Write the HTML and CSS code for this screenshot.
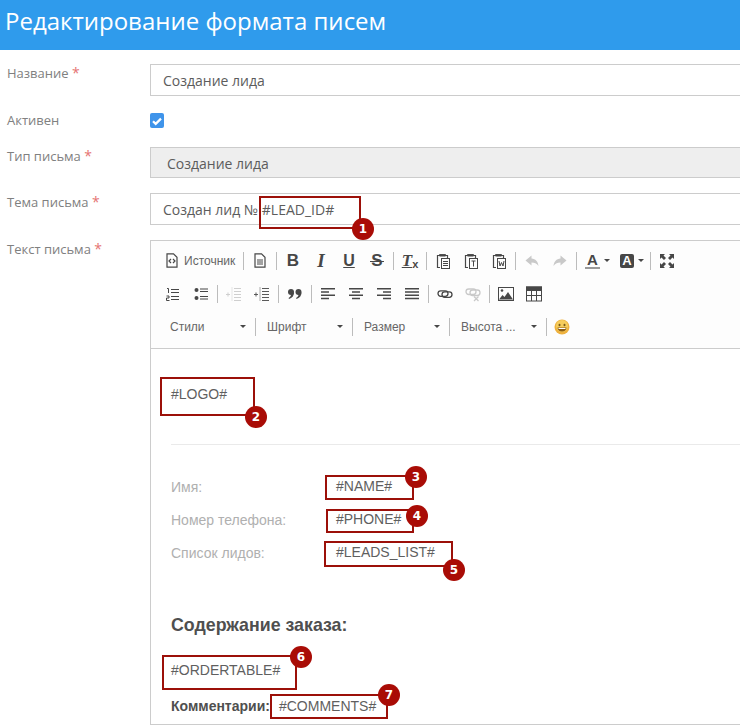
FILE: index.html
```html
<!DOCTYPE html>
<html lang="ru">
<head>
<meta charset="utf-8">
<title>Редактирование формата писем</title>
<link rel="stylesheet" href="styles.css">
</head>
<body>
<div class="page">
  <header class="top"><h1>Редактирование формата писем</h1></header>
  <main class="form">
    <div class="row">
      <label class="lab">Название <i>*</i></label>
      <div class="field">Создание лида</div>
    </div>
    <div class="row row-check">
      <label class="lab">Активен</label>
      <span class="check"><svg viewBox="0 0 14 14" width="14" height="14"><path d="M3 7.200l2.700 2.700L11 4.600" fill="none" stroke="#fff" stroke-width="2.200"/></svg></span>
    </div>
    <div class="row">
      <label class="lab">Тип письма <i>*</i></label>
      <div class="field disabled">Создание лида</div>
    </div>
    <div class="row">
      <label class="lab">Тема письма <i>*</i></label>
      <div class="field">Создан лид № #LEAD_ID#</div>
    </div>
    <div class="row">
      <label class="lab">Текст письма <i>*</i></label>
      <div class="editor">
        <div class="toolbar">
          <div class="tb-row">
            <span class="btn btn-src">
              <svg viewBox="0 0 12 15" width="12" height="15"><path d="M1 .8h6.500L11 4.300v9.900H1z" fill="none" stroke="#474747" stroke-width="1.200"/><path d="M5 6L3 8l2 2M7 6l2 2-2 2" fill="none" stroke="#474747" stroke-width="1.200"/></svg>
              <span class="src-txt">Источник</span>
            </span>
            <span class="sep"></span>
            <span class="btn"><svg viewBox="0 0 12 15" width="12" height="15"><path d="M1 .8h6.500L11 4.300v9.900H1z" fill="none" stroke="#474747" stroke-width="1.200"/><path d="M3 7h6M3 9h6M3 11h6" stroke="#474747"/></svg></span>
            <span class="sep"></span>
            <span class="btn g-b">B</span>
            <span class="btn g-i">I</span>
            <span class="btn g-u">U</span>
            <span class="btn g-s">S</span>
            <span class="sep"></span>
            <span class="btn g-i g-tx"><span class="tx-t">T</span><small>x</small></span>
            <span class="sep"></span>
            <span class="btn"><svg viewBox="0 0 16 16" width="16" height="16"><path d="M5 2.500H2.500v12H5" fill="none" stroke="#474747" stroke-width="1.200"/><path d="M4.500 3V1.600h6V3z" fill="#474747" stroke="#474747"/><path d="M11 2.500h1.500V5" fill="none" stroke="#474747" stroke-width="1.200"/><rect x="6.500" y="5.500" width="8" height="10" fill="none" stroke="#474747"/><path d="M8 8.500h5M8 10.500h5M8 12.500h5" stroke="#474747"/></svg></span>
            <span class="btn"><svg viewBox="0 0 16 16" width="16" height="16"><path d="M5 2.500H2.500v12H5" fill="none" stroke="#474747" stroke-width="1.200"/><path d="M4.500 3V1.600h6V3z" fill="#474747" stroke="#474747"/><path d="M11 2.500h1.500V5" fill="none" stroke="#474747" stroke-width="1.200"/><rect x="6.500" y="5.500" width="8" height="10" fill="none" stroke="#474747"/><path d="M8.500 8h4M10.500 8v5.500" stroke="#474747"/></svg></span>
            <span class="btn"><svg viewBox="0 0 16 16" width="16" height="16"><path d="M5 2.500H2.500v12H5" fill="none" stroke="#474747" stroke-width="1.200"/><path d="M4.500 3V1.600h6V3z" fill="#474747" stroke="#474747"/><path d="M11 2.500h1.500V5" fill="none" stroke="#474747" stroke-width="1.200"/><rect x="6.500" y="5.500" width="8" height="10" fill="none" stroke="#474747"/><path d="M8 8l1 5 1.500-3.500L12 13l1-5" fill="none" stroke="#474747"/></svg></span>
            <span class="sep"></span>
            <span class="btn"><svg viewBox="0 0 16 16" width="16" height="16"><path d="M7.500 2.500L1.500 7.500l6 5V9.500c3 0 5 .8 7 3.500-.4-4.500-3-7.200-7-7.500z" fill="#c9c9c9"/></svg></span>
            <span class="btn"><svg viewBox="0 0 16 16" width="16" height="16"><path d="M8.500 2.500l6 5-6 5V9.500c-3 0-5 .8-7 3.500.4-4.500 3-7.200 7-7.500z" fill="#c9c9c9"/></svg></span>
            <span class="sep"></span>
            <span class="btn btn-color"><span class="g-a">A</span><span class="caret"></span></span>
            <span class="btn btn-color"><span class="g-abg">A</span><span class="caret"></span></span>
            <span class="sep"></span>
            <span class="btn"><svg viewBox="0 0 16 16" width="16" height="16" fill="#474747"><path d="M1 1h5L4.500 2.500 7 5 5 7 2.500 4.500 1 6zM15 1v5L13.500 4.500 11 7 9 5 11.500 2.500 10 1zM1 15v-5l1.500 1.500L5 9l2 2-2.500 2.500L6 15zM15 15h-5l1.500-1.500L9 11l2-2 2.500 2.500L15 10z"/></svg></span>
          </div>
          <div class="tb-row tb-row2">
            <span class="btn"><svg viewBox="0 0 16 16" width="16" height="16"><path d="M6 3.500h8M6 6.500h8M6 10.500h8M6 13.500h8" stroke="#474747" stroke-width="1.200"/><path d="M2 2.500h1.500V7M1.500 10h2.500v2H1.500v2.500H4.500" fill="none" stroke="#474747"/></svg></span>
            <span class="btn"><svg viewBox="0 0 16 16" width="16" height="16"><circle cx="3.500" cy="4" r="2" fill="#474747"/><circle cx="3.500" cy="12" r="2" fill="#474747"/><path d="M7 3h8M7 5.500h8M7 10.500h8M7 13h8" stroke="#474747" stroke-width="1.200"/></svg></span>
            <span class="sep"></span>
            <span class="btn"><svg viewBox="0 0 16 16" width="16" height="16" stroke="#cfcfcf"><path d="M8 2.500h7M8 5.500h7M8 8.500h7M8 11.500h7M8 14.500h7"/><path d="M6 1.500v14" stroke-dasharray="1 1"/><path d="M0 8.500h4M2 6.500v4"/></svg></span>
            <span class="btn"><svg viewBox="0 0 16 16" width="16" height="16" stroke="#5a5a5a"><path d="M8 2.500h7M8 5.500h7M8 8.500h7M8 11.500h7M8 14.500h7"/><path d="M6 1.500v14" stroke-dasharray="1 1"/><path d="M0 8.500h4M2 6.500v4"/></svg></span>
            <span class="sep"></span>
            <span class="btn"><svg viewBox="0 0 16 16" width="16" height="16" fill="#474747"><circle cx="4" cy="6" r="3"/><path d="M7 6.500C7 10 5 12 2 13l-.4-1C3 11.200 4 10 4.200 8z"/><circle cx="11.500" cy="6" r="3"/><path d="M14.500 6.500c0 3.500-2 5.500-5 6.500l-.4-1c1.400-.8 2.400-2 2.600-4z"/></svg></span>
            <span class="sep"></span>
            <span class="btn"><svg viewBox="0 0 16 16" width="16" height="16" stroke="#474747" stroke-width="1.500"><path d="M1 2.800h14M1 6h8M1 9.200h14M1 12.400h8"/></svg></span>
            <span class="btn"><svg viewBox="0 0 16 16" width="16" height="16" stroke="#474747" stroke-width="1.500"><path d="M1 2.800h14M4 6h8M1 9.200h14M4 12.400h8"/></svg></span>
            <span class="btn"><svg viewBox="0 0 16 16" width="16" height="16" stroke="#474747" stroke-width="1.500"><path d="M1 2.800h14M7 6h8M1 9.200h14M7 12.400h8"/></svg></span>
            <span class="btn"><svg viewBox="0 0 16 16" width="16" height="16" stroke="#474747" stroke-width="1.500"><path d="M1 2.800h14M1 6h14M1 9.200h14M1 12.400h14"/></svg></span>
            <span class="sep"></span>
            <span class="btn"><svg viewBox="0 0 16 16" width="16" height="16" fill="none" stroke="#474747" stroke-width="1.300"><rect x="1" y="4.800" width="10" height="5.500" rx="2.700"/><rect x="5" y="5.800" width="10" height="5.500" rx="2.700"/></svg></span>
            <span class="btn"><svg viewBox="0 0 16 16" width="16" height="16" fill="none" stroke="#c9c9c9" stroke-width="1.300"><rect x="1" y="3" width="10" height="5.500" rx="2.700"/><rect x="5" y="4" width="10" height="5.500" rx="2.700"/><path d="M9 10.500l4.500 4.500M13.500 10.500L9 15"/></svg></span>
            <span class="sep"></span>
            <span class="btn"><svg viewBox="0 0 16 16" width="16" height="16"><rect x=".5" y="1.500" width="15" height="13" fill="none" stroke="#474747"/><circle cx="4" cy="4.500" r="1.300" fill="#474747"/><path d="M1 13.500l3.500-4.500 2 2 3.500-5 5 7.500z" fill="#474747"/></svg></span>
            <span class="btn"><svg viewBox="0 0 16 16" width="16" height="16"><rect x=".5" y="1" width="15" height="14" fill="none" stroke="#474747"/><rect x="0" y=".5" width="16" height="4.500" fill="#474747"/><path d="M0 9.500h16M5.500 5v10M10.500 5v10" stroke="#474747"/></svg></span>
          </div>
          <div class="tb-row">
            <span class="combo combo-first">Стили<span class="caret"></span></span><span class="sep-combo"></span>
            <span class="combo">Шрифт<span class="caret"></span></span><span class="sep-combo"></span>
            <span class="combo">Размер<span class="caret"></span></span><span class="sep-combo"></span>
            <span class="combo">Высота ...<span class="caret"></span></span><span class="sep-combo"></span>
            <span class="btn btn-smile"><svg viewBox="0 0 16 16" width="16" height="16"><circle cx="8" cy="8" r="7.500" fill="#eeb13e"/><circle cx="8" cy="7" r="6" fill="#f6cd5c"/><ellipse cx="5.500" cy="6" rx="1" ry="1.300" fill="#7a5a1a"/><ellipse cx="10.500" cy="6" rx="1" ry="1.300" fill="#7a5a1a"/><path d="M3.500 8.500h9c0 2.500-2 4-4.500 4s-4.500-1.500-4.500-4z" fill="#8a5c14"/><path d="M4.500 9h7v1h-7z" fill="#fff"/></svg></span>
          </div>
        </div>
        <div class="content">
          <p class="logo">#LOGO#</p>
          <hr class="rule">
          <div class="info">
            <span class="k">Имя:</span><span class="v">#NAME#</span>
            <span class="k">Номер телефона:</span><span class="v">#PHONE#</span>
            <span class="k">Список лидов:</span><span class="v">#LEADS_LIST#</span>
          </div>
          <h2 class="order">Содержание заказа:</h2>
          <p class="otable">#ORDERTABLE#</p>
          <p class="comm"><b>Комментарии:</b><span class="comm-v">#COMMENTS#</span></p>
        </div>
      </div>
    </div>
  </main>

  <span class="box b1"></span><span class="num n1">1</span>
  <span class="box b2"></span><span class="num n2">2</span>
  <span class="box b3"></span><span class="num n3">3</span>
  <span class="box b4"></span><span class="num n4">4</span>
  <span class="box b5"></span><span class="num n5">5</span>
  <span class="box b6"></span><span class="num n6">6</span>
  <span class="box b7"></span><span class="num n7">7</span>
</div>
</body>
</html>
```
FILE: styles.css
```css
* { box-sizing: border-box; }
html, body { margin: 0; padding: 0; height: 725px; overflow: hidden; background: #fff; }
.page { position: relative; width: 740px; height: 725px; overflow: hidden; font-family: "Open Sans", sans-serif; }

.top { height: 50px; background: #2f9bec; padding: 0 5px; display: flex; align-items: center; }
.top h1 { margin: 0 0 9px; font-size: 24px; font-weight: 400; color: #fff; line-height: 32px; white-space: nowrap; }

.form { padding: 14px 0 0 7px; width: 900px; }
.row { display: flex; align-items: flex-start; margin-bottom: 15px; }
.row-check { height: 21px; }
.lab { width: 143px; flex: none; font-size: 13px; line-height: 18px; color: #808080; }
.lab i { font-style: normal; color: #e57373; font-size: 14px; }

.field { width: 740px; height: 32px; border: 1px solid #ccc; padding: 0 12px; font-size: 14px; line-height: 31px; color: #5c5c5c; background: #fff; white-space: nowrap; }
.field.disabled { background: #eee; padding-left: 16px; height: 31px; }

.check { width: 14px; height: 15px; margin-top: 2px; border-radius: 2px; background: #3f94ea; display: flex; align-items: center; justify-content: center; }

.editor { width: 740px; height: 485px; border: 1px solid #ccc; display: flex; flex-direction: column; }
.toolbar { height: 108px; flex: none; background: #fdfdfd; border-bottom: 1px solid #ccc; padding: 3px 0 0 7px; }
.tb-row { display: flex; align-items: center; height: 33px; color: #474747; }
.tb-row2 { padding-left: 1px; }
.btn { width: 28px; height: 24px; flex: none; display: flex; align-items: center; justify-content: center; }
.btn-src { width: 83px; justify-content: flex-start; padding-left: 8px; gap: 6px; }
.src-txt { font: 12px/16px "Liberation Sans", sans-serif; color: #666; white-space: nowrap; }
.sep { width: 1px; height: 18px; margin: 0 2px; background: #bcbcbc; flex: none; }
.g-b { font: 700 17px/20px "Liberation Sans", sans-serif; }
.g-i { font: italic 700 19px/20px "Liberation Serif", serif; }
.g-u { font: 700 16px/20px "Liberation Sans", sans-serif; text-decoration: underline; }
.g-s { position: relative; font: 700 17px/20px "Liberation Sans", sans-serif; }
.g-s::after { content: ""; position: absolute; left: 7px; right: 7px; top: 12px; height: 1.500px; background: #474747; }
.g-tx { font-size: 17px; }
.g-tx .tx-t { text-decoration: underline; }
.g-tx small { font: 700 11px/11px "Liberation Sans", sans-serif; align-self: flex-end; margin-bottom: 3px; }
.btn-color { width: 34px; justify-content: flex-start; padding-left: 6px; gap: 4px; }
.btn-color + .btn-color { width: 35px; padding-left: 7px; }
.g-a { font: 700 15px/15px "Liberation Sans", sans-serif; color: #474747; border-bottom: 2px solid #999; width: 15px; text-align: center; }
.g-abg { font: 700 13px/14px "Liberation Sans", sans-serif; color: #fff; background: #474747; border-radius: 2px; width: 14px; height: 14px; text-align: center; }
.caret { width: 0; height: 0; border: 3px solid transparent; border-top: 3px solid #474747; border-bottom: 0; flex: none; }

.combo { width: 96px; flex: none; height: 24px; display: flex; align-items: center; justify-content: space-between; padding: 0 9px 0 11px; font: 12px/16px "Liberation Sans", sans-serif; color: #666; }
.combo-first { width: 97px; padding-left: 12px; }
.sep-combo { width: 1px; height: 18px; background: #bcbcbc; flex: none; }
.btn-smile { margin-left: 1px; }

.content { padding: 0 0 0 20px; font-family: "Liberation Sans", sans-serif; font-size: 14px; color: #5f5f5f; flex: 1; background: #fff; }
.logo { margin: 37px 0 0; line-height: 16px; }
.rule { margin: 42px 0 0 0; border: 0; border-top: 1px solid #eaeaea; }
.info { margin-top: 34px; display: grid; grid-template-columns: 165px 1fr; row-gap: 17px; line-height: 16px; }
.k { color: #b0b0b0; }
.v { color: #5f5f5f; margin-top: -1px; }
.order { margin: 54px 0 0; font-size: 17.800px; line-height: 20px; font-weight: 700; color: #4f4f4f; }
.otable { margin: 27px 0 0; line-height: 16px; }
.comm { margin: 20px 0 0; line-height: 16px; }
.comm b { color: #4f4f4f; }
.comm-v { margin-left: 9px; }

.box { position: absolute; border: 2px solid #9c1009; }
.num { position: absolute; width: 22px; height: 22px; border-radius: 50%; background: #a90c06; color: #fff; font: 700 12px/22px "DejaVu Sans", sans-serif; text-align: center; }
.b1 { left: 259px; top: 196px; width: 102px; height: 33px; }
.n1 { left: 352px; top: 218px; }
.b2 { left: 160px; top: 377px; width: 95px; height: 39px; }
.n2 { left: 245px; top: 406px; }
.b3 { left: 325px; top: 475px; width: 89px; height: 25px; }
.n3 { left: 405px; top: 466px; }
.b4 { left: 326px; top: 509px; width: 88px; height: 24px; }
.n4 { left: 406px; top: 505px; }
.b5 { left: 324px; top: 541px; width: 129px; height: 26px; }
.n5 { left: 443px; top: 559px; }
.b6 { left: 162px; top: 655px; width: 135px; height: 35px; }
.n6 { left: 290px; top: 646px; }
.b7 { left: 270px; top: 694px; width: 118px; height: 25px; }
.n7 { left: 378px; top: 684px; }
```
